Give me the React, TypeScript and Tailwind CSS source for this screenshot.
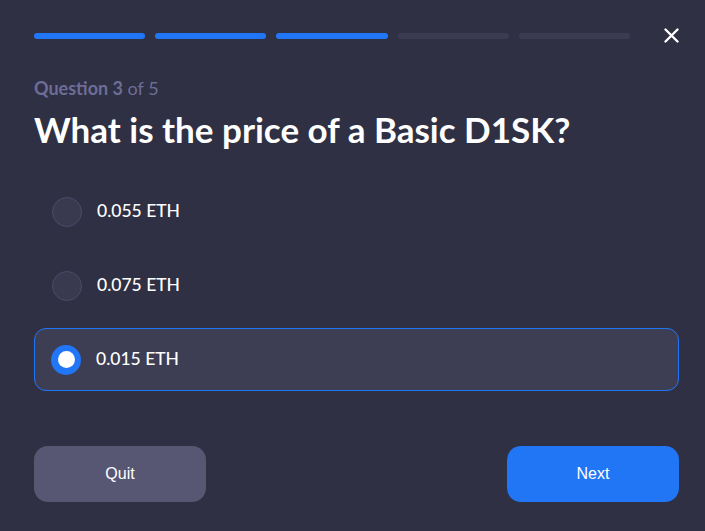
import React from "react";

const options = ["0.055 ETH", "0.075 ETH", "0.015 ETH"];

export default function App() {
  const selected = 2;
  return (
    <div className="w-[705px] h-[531px] bg-[#2f3043] pl-[34px] pr-[26px] pt-[32px] font-['Lato',sans-serif]">
      <div className="flex items-center h-[7px]">
        <div className="flex-1 flex gap-[10px]">
          {[0, 1, 2, 3, 4].map((i) => (
            <div
              key={i}
              className={
                i < 3
                  ? "flex-1 h-[6px] rounded-full bg-[#2176f6]"
                  : "flex-1 h-[6px] rounded-full bg-[#3b3c51]"
              }
            />
          ))}
        </div>
        <button className="ml-[33px] w-[16px] h-[16px] flex items-center justify-center text-white">
          <svg width="15" height="15" viewBox="0 0 15 15" fill="none">
            <path d="M1.5 1.5L13.5 13.5M13.5 1.5L1.5 13.5" stroke="white" strokeWidth="2.4" strokeLinecap="round" />
          </svg>
        </button>
      </div>
      <div className="mt-[38px] text-[18px] leading-[22px] text-[#6d6d98]">
        <span className="font-bold">Question 3</span> <span>of 5</span>
      </div>
      <h1 className="mt-[10px] text-[35px] leading-[41px] font-bold text-white">
        What is the price of a Basic D1SK?
      </h1>
      <div className="mt-[30px] flex flex-col gap-[11px]">
        {options.map((o, i) => (
          <div
            key={o}
            className={
              i === selected
                ? "h-[63px] flex items-center px-[16px] rounded-[12px] border border-[#2176f6] bg-[#3d3e54]"
                : "h-[63px] flex items-center px-[17px] rounded-[12px] border border-transparent"
            }
          >
            {i === selected ? (
              <div className="w-[30px] h-[30px] rounded-full bg-[#2176f6] flex items-center justify-center">
                <div className="w-[17px] h-[17px] rounded-full bg-white" />
              </div>
            ) : (
              <div className="w-[30px] h-[30px] rounded-full bg-[#393a50] border border-[#4a4b66]" />
            )}
            <span className="ml-[15px] text-[17.5px] text-white font-medium">{o}</span>
          </div>
        ))}
      </div>
      <div className="mt-[55px] flex justify-between">
        <button className="w-[172px] h-[56px] rounded-[14px] bg-[#575774] text-white text-[16px] font-['Liberation_Sans',sans-serif]">
          Quit
        </button>
        <button className="w-[172px] h-[56px] rounded-[14px] bg-[#2176f6] text-white text-[16px] font-['Liberation_Sans',sans-serif]">
          Next
        </button>
      </div>
    </div>
  );
}
